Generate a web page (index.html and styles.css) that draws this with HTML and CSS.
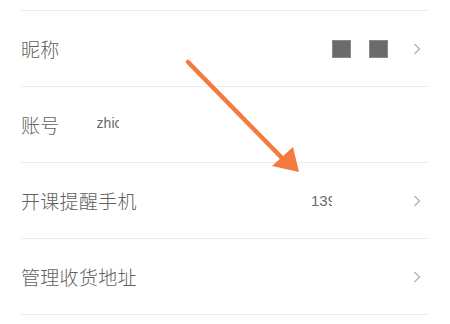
FILE: index.html
```html
<!DOCTYPE html>
<html lang="zh-CN">
<head>
    <meta charset="UTF-8">
    <meta name="viewport" content="width=device-width, initial-scale=1.0">
    <title>个人资料</title>
    <link rel="stylesheet" href="styles.css">
</head>
<body>
    <div class="list">
        <div class="row">
            <span class="label">昵称</span>
            <div class="right">
                <span class="mosaic"></span>
                <span class="mosaic"></span>
                <svg class="chevron" width="8" height="12" viewBox="0 0 8 12"><polyline points="1.5,1 6.5,6 1.5,11"/></svg>
            </div>
        </div>
        <div class="row">
            <span class="label">账号</span>
            <span class="value account">zhic</span>
        </div>
        <div class="row">
            <span class="label">开课提醒手机</span>
            <div class="right">
                <span class="value phone">139</span>
                <svg class="chevron" width="8" height="12" viewBox="0 0 8 12"><polyline points="1.5,1 6.5,6 1.5,11"/></svg>
            </div>
        </div>
        <div class="row">
            <span class="label">管理收货地址</span>
            <div class="right">
                <svg class="chevron" width="8" height="12" viewBox="0 0 8 12"><polyline points="1.5,1 6.5,6 1.5,11"/></svg>
            </div>
        </div>
    </div>

    <svg class="arrow" width="450" height="324" viewBox="0 0 450 324">
        <line x1="188" y1="62" x2="282" y2="158" stroke="#f47a40" stroke-width="4.5" stroke-linecap="round"/>
        <polygon points="299,172 272,166 293,147" fill="#f47a40"/>
    </svg>
</body>
</html>
```

FILE: styles.css
```css
* {
    margin: 0;
    padding: 0;
    box-sizing: border-box;
}

body {
    background: #ffffff;
    font-family: "Noto Sans CJK SC", "Noto Sans", sans-serif;
    color: #555;
    width: 450px;
    height: 324px;
    overflow: hidden;
    position: relative;
}

.list {
    margin: 10px 21px 0;
    border-top: 1px solid #ececec;
}

.row {
    display: flex;
    align-items: center;
    height: 76px;
    border-bottom: 1px solid #ececec;
}

.label {
    font-size: 19px;
    font-weight: 300;
    color: #606060;
    letter-spacing: 0.3px;
}

.right {
    margin-left: auto;
    display: flex;
    align-items: center;
    padding-right: 8px;
}

.value {
    font-family: "Liberation Sans", sans-serif;
    font-size: 14px;
    color: #6a6a6a;
    white-space: nowrap;
    overflow: hidden;
}

.account {
    margin-left: 37px;
    width: 22px;
    margin-top: -3px;
}

.phone {
    font-size: 15px;
    width: 21px;
    margin-right: 81px;
}

.mosaic {
    width: 19px;
    height: 18px;
    background: #6b6b6b;
    border: 1px solid #8a8a8a;
    margin-right: 18px;
}

.mosaic + .mosaic {
    margin-right: 25px;
}

.chevron polyline {
    fill: none;
    stroke: #b3b3b3;
    stroke-width: 1.4;
}

.arrow {
    position: absolute;
    top: 0;
    left: 0;
}
```
